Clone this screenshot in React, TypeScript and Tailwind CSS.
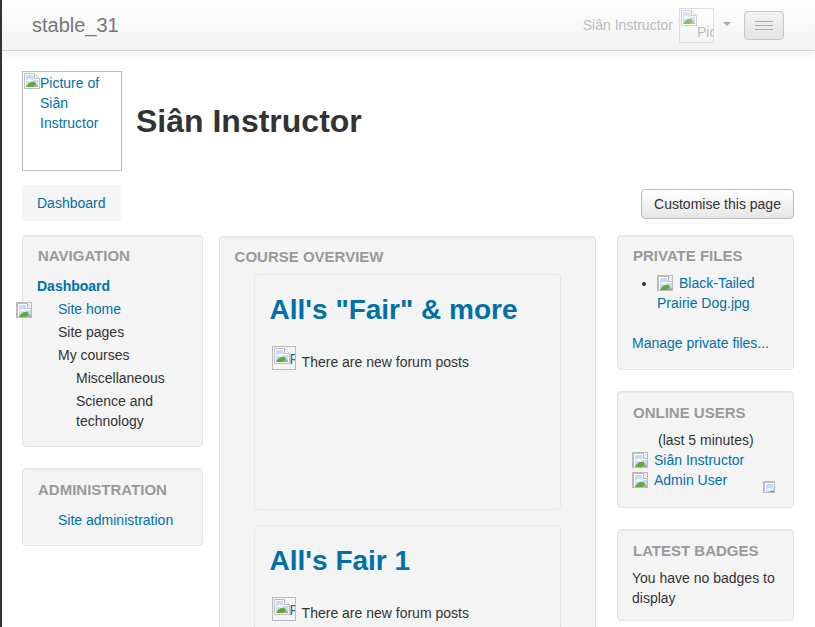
import type { ReactNode } from "react";

// chrome's broken image glyph
function BrokenImg() {
  return (
    <svg width="16" height="16" viewBox="0 0 16 16" className="block shrink-0">
      <path d="M0.5 0.5H10.5L15.5 5.5V15.5H0.5Z" fill="#fff" stroke="#bdbdbd" />
      <path d="M10.5 0.5V5.5H15.5" fill="#f2f2f2" stroke="#bdbdbd" />
      <path d="M2 2H9.5V7H14V14H2Z" fill="#c9d9f8" />
      <path d="M3 7.5C3.5 5.5 6 5 7 6.5C8.5 6.3 9.5 7.2 9.5 8.2H3Z" fill="#fff" />
      <path d="M2 14C3.5 10.5 7 8 10.5 9L12 11L9.5 14Z" fill="#5dab30" />
      <path d="M9.5 14L12 11L14 13V14Z" fill="#a5a5a5" />
    </svg>
  );
}

function SmallIcon() {
  return (
    <span className="block h-4 w-4 shrink-0 overflow-hidden border border-[#bbb]">
      <BrokenImg />
    </span>
  );
}

function Block({ title, className, titleClass, children }: { title: string; className?: string; titleClass?: string; children: ReactNode }) {
  return (
    <section className={`rounded-[4px] border border-[#e3e3e3] bg-[#f4f4f4] shadow-[inset_0_1px_1px_rgba(0,0,0,0.05)] ${className ?? ""}`}>
      <h2 className={`px-[15px] text-[15px] leading-[20px] font-bold uppercase text-[#999] ${titleClass ?? "pt-[10px]"}`}>{title}</h2>
      {children}
    </section>
  );
}

function CourseBox({ title, className }: { title: string; className?: string }) {
  return (
    <div className={`mx-[34px] rounded-[4px] border border-dotted border-[#ddd] px-[15px] ${className ?? ""}`}>
      <h3 className="mt-[15px] text-[28px] leading-[40px] font-bold text-[#0070a8]">{title}</h3>
      <div className="mt-[16px] flex items-start pl-[2px]">
        <span className="flex h-6 w-6 overflow-hidden border border-[#bbb] p-[1px] text-[#0070a8]">
          <BrokenImg />
          <span className="mt-[3px] text-[14px] leading-[16px]">F</span>
        </span>
        <span className="mt-[6px] ml-[6px] leading-[20px]">There are new forum posts</span>
      </div>
    </div>
  );
}

export default function App() {
  return (
    <div className="h-[627px] overflow-hidden border-l-2 border-[#333] bg-white font-['Liberation_Sans',Arial,sans-serif] text-[14px] leading-[20px] text-[#333]">
      {/* navbar */}
      <header className="flex h-[51px] items-center border-b border-[#d4d4d4] bg-gradient-to-b from-white to-[#f2f2f2] pr-[31px] pl-[30px] shadow-[0_1px_10px_rgba(0,0,0,0.1)]">
        <span className="text-[20px] leading-[20px] text-[#777]">stable_31</span>
        <span className="ml-auto text-[#bbb]">Siân Instructor</span>
        <span className="ml-[6px] flex h-[35px] w-[35px] items-start overflow-hidden border border-[#ddd] p-px text-[#bbb]">
          <span className="opacity-70"><BrokenImg /></span>
          <span className="mt-[12px] text-[14px] leading-[20px]">Pic</span>
        </span>
        <span className="mb-[3px] ml-[9px] h-0 w-0 border-x-4 border-t-4 border-x-transparent border-t-[#aaa]" />
        <span className="ml-[13px] flex h-[29px] w-[40px] flex-col items-center justify-center gap-[3px] rounded-[4px] border border-[#c5c5c5] bg-gradient-to-b from-[#f2f2f2] to-[#e5e5e5]">
          <span className="h-px w-[18px] bg-[#aaa]" />
          <span className="h-px w-[18px] bg-[#aaa]" />
          <span className="h-px w-[18px] bg-[#aaa]" />
        </span>
      </header>

      <main className="pr-[21px] pl-[20px]">
        {/* page header */}
        <div className="mt-[20px] flex items-center">
          <div className="flex h-[100px] w-[100px] items-start border border-[#bbb] p-px text-[#0070a8]">
            <BrokenImg />
            <span className="w-[70px]">Picture of Siân Instructor</span>
          </div>
          <h1 className="ml-[14px] text-[32px] leading-[40px] font-bold text-[#333]">Siân Instructor</h1>
        </div>

        <div className="mt-[14px] flex items-start justify-between">
          <a className="flex h-[36px] w-[99px] items-center rounded-[4px] bg-[#f5f5f5] pl-[15px] text-[#0070a8]">Dashboard</a>
          <button className="mt-[4px] h-[30px] w-[153px] rounded-[4px] border border-[#bbb] bg-gradient-to-b from-white to-[#e6e6e6] text-[14px] text-[#333]">Customise this page</button>
        </div>

        <div className="mt-[14px] flex items-start">
          {/* left column */}
          <div className="flex w-[181px] shrink-0 flex-col gap-[21px]">
            <Block title="Navigation" className="h-[212px]">
              <ul className="mt-[9px]">
                <li className="pl-[14px] leading-[23px] font-bold text-[#0070a8]">Dashboard</li>
                <li className="relative pl-[35px] leading-[23px] text-[#0070a8]">
                  <span className="absolute top-[4px] left-[-7px]"><SmallIcon /></span>
                  Site home
                </li>
                <li className="pl-[35px] leading-[23px]">Site pages</li>
                <li className="pl-[35px] leading-[23px]">My courses</li>
                <li className="pl-[53px] leading-[23px]">Miscellaneous</li>
                <li className="mt-px pr-[30px] pl-[53px]">Science and technology</li>
              </ul>
            </Block>
            <Block title="Administration" titleClass="pt-[11px]" className="h-[78px]">
              <p className="mt-[10px] pl-[35px] text-[#0070a8]">Site administration</p>
            </Block>
          </div>

          {/* center column */}
          <div className="mt-px ml-[15.6px] w-[377.4px] shrink-0">
            <Block title="Course overview" className="h-[500px]">
              <CourseBox title={`All's "Fair" & more`} className="mt-[7px] h-[236px]" />
              <CourseBox title="All's Fair 1" className="mt-[15px] h-[200px]" />
            </Block>
          </div>

          {/* right column */}
          <div className="ml-[21px] flex w-[177px] shrink-0 flex-col gap-[21px]">
            <Block title="Private files" className="h-[135px]">
              <ul className="mt-[7px] list-disc pr-[14px] pl-[39px] text-[#0070a8] marker:text-[#333]">
                <li>
                  <span className="mr-[6px] inline-block align-[-3px]"><SmallIcon /></span>
                  Black-Tailed Prairie Dog.jpg
                </li>
              </ul>
              <p className="mt-[20px] pl-[14px] text-[#0070a8]">Manage private files...</p>
            </Block>
            <Block title="Online users" titleClass="pt-[11px]" className="relative h-[117px]">
              <p className="mt-[7px] pl-[40px]">(last 5 minutes)</p>
              <div className="flex items-center gap-[6px] pl-[14px] text-[#0070a8]"><SmallIcon />Siân Instructor</div>
              <div className="flex items-center gap-[6px] pl-[14px] text-[#0070a8]"><SmallIcon />Admin User</div>
              <span className="absolute right-[18px] bottom-[14px] block h-3 w-3 overflow-hidden border border-[#bbb]"><BrokenImg /></span>
            </Block>
            <Block title="Latest badges" titleClass="pt-[11px]" className="h-[92px]">
              <p className="mt-[7px] px-[14px]">You have no badges to display</p>
            </Block>
          </div>
        </div>
      </main>
    </div>
  );
}
